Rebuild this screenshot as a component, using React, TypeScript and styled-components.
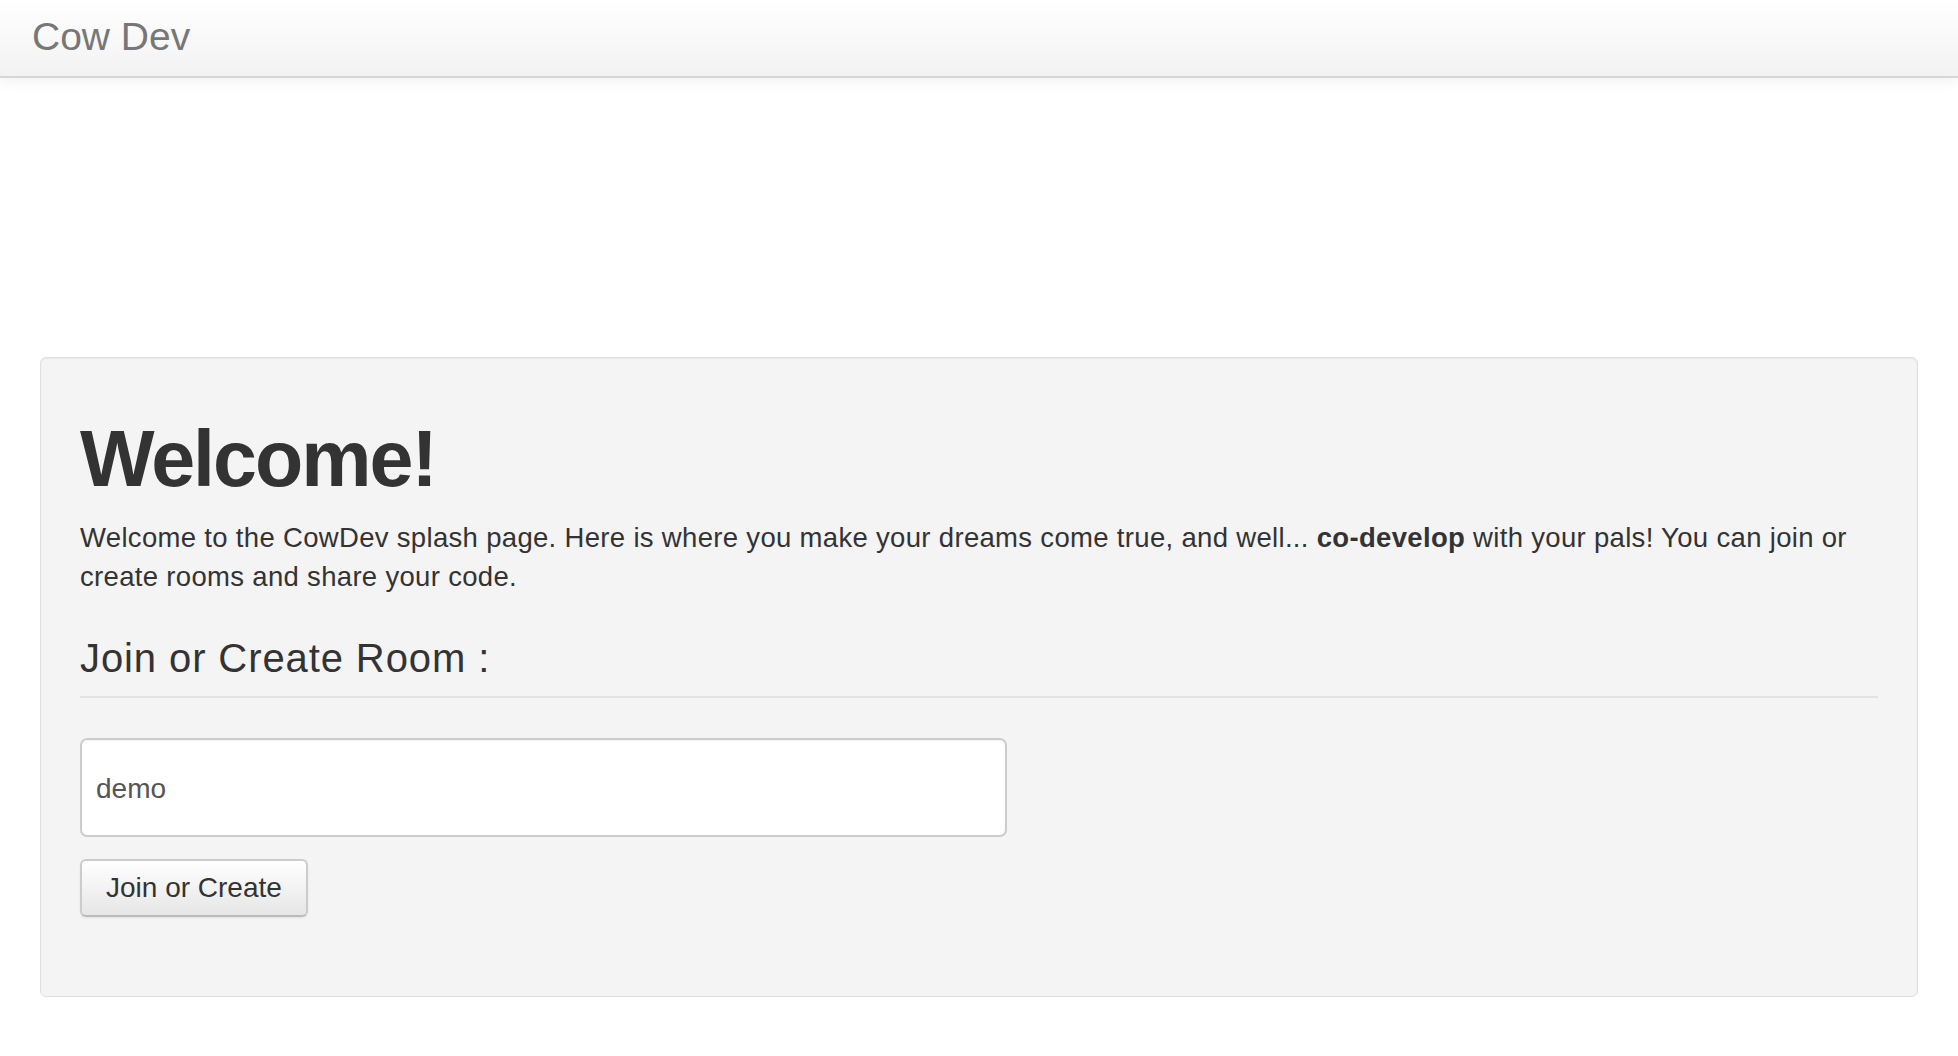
import React from "react";
import styled, { createGlobalStyle } from "styled-components";

const GlobalStyle = createGlobalStyle`
  html, body {
    margin: 0;
    padding: 0;
    background: #ffffff;
  }
  body {
    font-family: "Liberation Sans", Arial, Helvetica, sans-serif;
    color: #333333;
  }
  * { box-sizing: border-box; }
`;

const NavBar = styled.header`
  height: 78px;
  background: linear-gradient(to bottom, #ffffff 0%, #f2f2f2 100%);
  border-bottom: 2px solid #d6d6d6;
  box-shadow: 0 2px 14px rgba(0, 0, 0, 0.07);
  display: flex;
  align-items: center;
  padding-left: 32px;
`;

const Brand = styled.a`
  font-size: 39px;
  color: #777777;
  text-decoration: none;
  line-height: 1;
  margin-top: -4px;
`;

const Main = styled.main`
  padding: 279px 40px 60px;
`;

const Well = styled.section`
  background: #f4f4f4;
  border: 1px solid #e0e0e0;
  border-radius: 6px;
  box-shadow: inset 0 1px 2px rgba(0, 0, 0, 0.05);
  padding: 58px 39px 79px;
`;

const Title = styled.h1`
  margin: 0;
  font-size: 79px;
  font-weight: 700;
  line-height: 1.1;
  letter-spacing: -2px;
  color: #333333;
`;

const Lead = styled.p`
  margin: 15px 0 0;
  font-size: 27.5px;
  line-height: 39px;
  letter-spacing: 0.32px;
  color: #333333;
`;

const SectionHeader = styled.div`
  margin-top: 40px;
  padding-bottom: 16px;
  border-bottom: 2px solid #e3e3e3;
`;

const SubTitle = styled.h2`
  margin: 0;
  font-size: 40px;
  font-weight: 400;
  line-height: 1.1;
  letter-spacing: 0.9px;
  color: #333333;
`;

const Form = styled.form`
  margin-top: 40px;
  display: flex;
  flex-direction: column;
  align-items: flex-start;
  gap: 22px;
`;

const RoomInput = styled.input`
  width: 927px;
  height: 99px;
  padding: 4px 14px 0;
  font-family: "Liberation Sans", Arial, Helvetica, sans-serif;
  font-size: 28px;
  color: #555555;
  background: #ffffff;
  border: 2px solid #cccccc;
  border-radius: 7px;
  box-shadow: inset 0 1px 2px rgba(0, 0, 0, 0.06);
  outline: none;
`;

const Button = styled.button`
  height: 58px;
  padding: 0 24px;
  font-family: "Liberation Sans", Arial, Helvetica, sans-serif;
  font-size: 28px;
  color: #333333;
  background: linear-gradient(to bottom, #ffffff 0%, #e6e6e6 100%);
  border: 2px solid #cccccc;
  border-bottom-color: #bbbbbb;
  border-radius: 6px;
  box-shadow: 0 1px 2px rgba(0, 0, 0, 0.08);
  cursor: pointer;
`;

export default function App() {
  return (
    <>
      <GlobalStyle />
      <NavBar>
        <Brand href="#">Cow Dev</Brand>
      </NavBar>
      <Main>
        <Well>
          <Title>Welcome!</Title>
          <Lead>
            Welcome to the CowDev splash page. Here is where you make your dreams come true, and
            well... <strong>co-develop</strong> with your pals! You can join or create rooms and
            share your code.
          </Lead>
          <SectionHeader>
            <SubTitle>Join or Create Room :</SubTitle>
          </SectionHeader>
          <Form onSubmit={(e) => e.preventDefault()}>
            <RoomInput type="text" defaultValue="demo" />
            <Button type="submit">Join or Create</Button>
          </Form>
        </Well>
      </Main>
    </>
  );
}
